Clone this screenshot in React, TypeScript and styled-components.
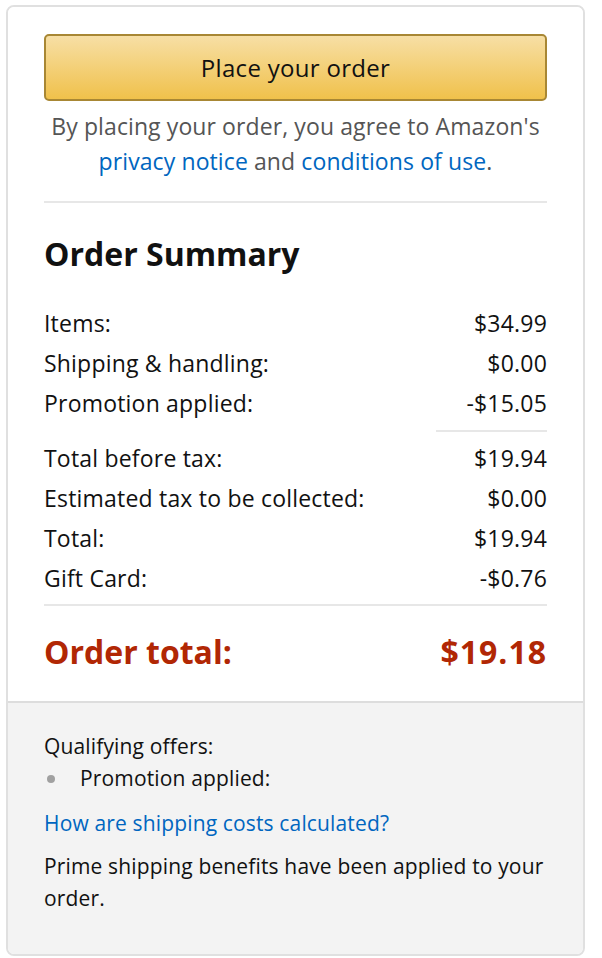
import React from 'react'
import styled, { createGlobalStyle } from 'styled-components'

const GlobalStyle = createGlobalStyle`
  body {
    margin: 0;
    background: #ffffff;
    font-family: 'Open Sans', 'Noto Sans', sans-serif;
    color: #111111;
  }
`

const Page = styled.div`
  padding: 5px 0 0 6px;
`

const Box = styled.div`
  width: 579px;
  box-sizing: border-box;
  border: 2px solid #e0e0e0;
  border-radius: 8px;
  overflow: hidden;
`

const TopSection = styled.div`
  padding: 27px 36px 29px;
  background: #ffffff;
`

const OrderButton = styled.button`
  display: block;
  width: 100%;
  height: 67px;
  border: 2px solid #a88734;
  border-radius: 5px;
  background: linear-gradient(to bottom, #f7dfa5, #f0c14b);
  font-family: inherit;
  font-size: 24px;
  letter-spacing: 0.3px;
  color: #111111;
  cursor: pointer;
`

const Agreement = styled.p`
  margin: 8px 0 0;
  padding-bottom: 22px;
  text-align: center;
  font-size: 23px;
  letter-spacing: 0.1px;
  line-height: 35px;
  color: #555555;
  border-bottom: 2px solid #e7e7e7;
`

const Link = styled.a`
  color: #0066c0;
  text-decoration: none;
`

const Title = styled.h2`
  margin: 31px 0 29px;
  font-size: 32px;
  line-height: 40px;
  font-weight: 700;
`

const Row = styled.div`
  display: flex;
  justify-content: space-between;
  font-size: 23px;
  letter-spacing: 0.2px;
  line-height: 40px;
`

const Group = styled.div<{ $divider?: 'partial' | 'full' }>`
  display: flex;
  flex-direction: column;
  padding-bottom: 6px;
  border-bottom: ${(p) => (p.$divider === 'full' ? '2px solid #e7e7e7' : 'none')};

  ${(p) =>
    p.$divider === 'partial' &&
    `
    &::after {
      content: '';
      align-self: flex-end;
      width: 111px;
      height: 2px;
      margin-top: 7px;
      background: #e7e7e7;
    }
  `}
`

const TotalRow = styled.div`
  display: flex;
  justify-content: space-between;
  margin-top: 26px;
  font-size: 32px;
  line-height: 40px;
  font-weight: 700;
  color: #b12704;

  span:last-child {
    letter-spacing: 1px;
  }
`

const BottomSection = styled.div`
  padding: 27px 36px 40px;
  background: #f3f3f3;
  border-top: 2px solid #dddddd;
  font-size: 21px;
  letter-spacing: 0.15px;
`

const Offers = styled.div`
  line-height: 32px;
`

const OfferList = styled.ul`
  margin: 0;
  padding: 0 0 0 36px;
  list-style: none;

  li {
    position: relative;
  }

  li::before {
    content: '';
    position: absolute;
    left: -33px;
    top: 13px;
    width: 8px;
    height: 8px;
    border-radius: 50%;
    background: #a0a0a0;
  }
`

const ShippingLink = styled(Link)`
  display: block;
  margin-top: 13px;
  line-height: 32px;
`

const Note = styled.p`
  margin: 11px 0 0;
  line-height: 32px;
`

export default function App() {
  return (
    <>
      <GlobalStyle />
      <Page>
        <Box>
          <TopSection>
            <OrderButton>Place your order</OrderButton>
            <Agreement>
              By placing your order, you agree to Amazon's <Link href="#">privacy notice</Link> and{' '}
              <Link href="#">conditions of use</Link>.
            </Agreement>
            <Title>Order Summary</Title>
            <Group $divider="partial">
              <Row>
                <span>Items:</span>
                <span>$34.99</span>
              </Row>
              <Row>
                <span>Shipping &amp; handling:</span>
                <span>$0.00</span>
              </Row>
              <Row>
                <span>Promotion applied:</span>
                <span>-$15.05</span>
              </Row>
            </Group>
            <Group $divider="full">
              <Row>
                <span>Total before tax:</span>
                <span>$19.94</span>
              </Row>
              <Row>
                <span>Estimated tax to be collected:</span>
                <span>$0.00</span>
              </Row>
              <Row>
                <span>Total:</span>
                <span>$19.94</span>
              </Row>
              <Row>
                <span>Gift Card:</span>
                <span>-$0.76</span>
              </Row>
            </Group>
            <TotalRow>
              <span>Order total:</span>
              <span>$19.18</span>
            </TotalRow>
          </TopSection>
          <BottomSection>
            <Offers>
              Qualifying offers:
              <OfferList>
                <li>Promotion applied:</li>
              </OfferList>
            </Offers>
            <ShippingLink href="#">How are shipping costs calculated?</ShippingLink>
            <Note>Prime shipping benefits have been applied to your order.</Note>
          </BottomSection>
        </Box>
      </Page>
    </>
  )
}
